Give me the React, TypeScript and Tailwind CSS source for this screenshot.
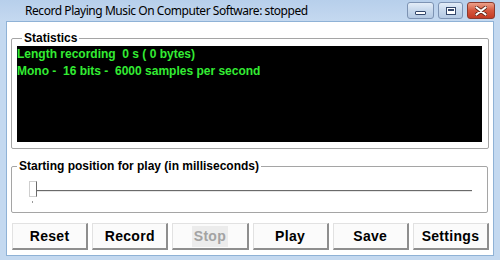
import React from "react";

function CaptionButtons() {
  return (
    <div className="ml-auto mr-[5px] mt-[2px] flex items-center gap-[4px]">
      <div className="flex h-[17px] w-[27px] items-center justify-center rounded-[3px] border border-[#7d93b3] bg-gradient-to-b from-[#e3edf8] via-[#c7d8ec] to-[#b4c9e3]">
        <div className="mt-[4px] h-[4px] w-[11px] rounded-[1px] border border-[#34476a] bg-white" />
      </div>
      <div className="flex h-[17px] w-[25px] items-center justify-center rounded-[3px] border border-[#7d93b3] bg-gradient-to-b from-[#e3edf8] via-[#c7d8ec] to-[#b4c9e3]">
        <div className="h-[8px] w-[10px] border border-[#34476a] bg-white p-[1px]">
          <div className="h-full w-full border-t-2 border-[#34476a]" />
        </div>
      </div>
      <div className="flex h-[17px] w-[28px] items-center justify-center rounded-[3px] border border-[#8a3a2e] bg-gradient-to-b from-[#eba08a] via-[#d5573e] to-[#c43a24]">
        <svg width="12" height="10" viewBox="0 0 12 10">
          <path d="M1.5 1.5 L10.5 8.5 M10.5 1.5 L1.5 8.5" stroke="#5a2418" strokeWidth="3.6" strokeLinecap="round" />
          <path d="M1.5 1.5 L10.5 8.5 M10.5 1.5 L1.5 8.5" stroke="#ffffff" strokeWidth="2.2" strokeLinecap="round" />
        </svg>
      </div>
    </div>
  );
}

function Btn({ label, disabled }: { label: string; disabled?: boolean }) {
  return (
    <button
      className={
        "flex h-[27px] flex-1 items-center justify-center border-l border-t border-[#e2e2e2] border-b-2 border-r-2 border-b-[#8e8e8e] border-r-[#8e8e8e] bg-[#fbfbfb] text-[14px] font-bold tracking-[0.3px] " +
        (disabled ? "text-[#a3a3a3]" : "text-black")
      }
    >
      <span className={disabled ? "bg-[#ececec] px-[2px]" : ""}>{label}</span>
    </button>
  );
}

export default function App() {
  return (
    <div className="flex h-[260px] w-[500px] flex-col bg-[#c4d9f0] font-['Liberation_Sans',Arial,sans-serif] text-black">
      <div className="flex h-[22px] items-start bg-gradient-to-b from-[#b7cfeb] to-[#c5d9f0]">
        <div className="ml-[25px] mt-[3px] font-['Noto_Sans',sans-serif] text-[12px] leading-[16px] tracking-[-0.45px] text-black">
          Record Playing Music On Computer Software: stopped
        </div>
        <CaptionButtons />
      </div>
      <div className="flex flex-1 px-[7px] pb-[5px]">
        <div className="flex flex-1 flex-col bg-white pl-[4px] pr-[4px] pt-[9px] outline outline-1 outline-[#8fb2d6]">
          <fieldset className="rounded-[2px] border border-[#a5a5a5] px-[5px] pb-[6px] pr-[6px]">
            <legend className="ml-[5px] px-[2px] text-[12px] font-bold leading-[14px]">Statistics</legend>
            <div className="mt-[1px] h-[96px] bg-black text-[12px] font-bold leading-[17px] text-[#33ec33]">
              <div className="whitespace-pre">Length recording  0 s ( 0 bytes)</div>
              <div className="whitespace-pre">Mono -  16 bits -  6000 samples per second</div>
            </div>
          </fieldset>
          <fieldset className="mt-[10px] mr-[1px] rounded-[2px] border border-[#a5a5a5]">
            <legend className="ml-[5px] px-[2px] text-[12px] font-bold leading-[14px]">
              Starting position for play (in milliseconds)
            </legend>
            <div className="relative h-[39px] pl-[24px] pr-[15px] pt-[17px]">
              <div className="h-[1px] bg-[#6a6a6a]" />
              <div className="h-[1px] bg-[#e6e6e6]" />
              <div className="absolute left-[17px] top-[8px] h-[16px] w-[8px] border border-[#cfcfcf] border-r-[#6a6a6a] bg-white" />
              <div className="absolute left-[20px] top-[28px] h-[2px] w-[1px] bg-[#9a9a9a]" />
            </div>
          </fieldset>
          <div className="mt-[10px] flex gap-[4px] pl-[1px]">
            <Btn label="Reset" />
            <Btn label="Record" />
            <Btn label="Stop" disabled />
            <Btn label="Play" />
            <Btn label="Save" />
            <Btn label="Settings" />
          </div>
        </div>
      </div>
    </div>
  );
}
